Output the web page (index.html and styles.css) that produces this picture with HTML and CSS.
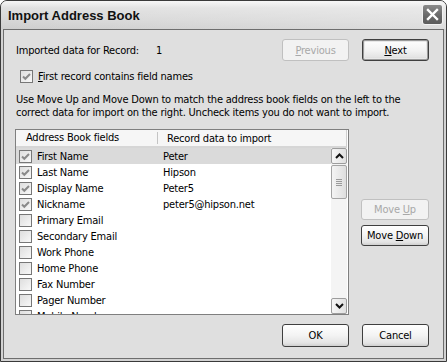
FILE: index.html
```html
<!DOCTYPE html>
<html>
<head>
<meta charset="utf-8">
<link rel="stylesheet" href="styles.css">
</head>
<body>
<div class="window">
  <div class="titlebar">
    <span class="title">Import Address Book</span>
    <span class="close"><svg width="21" height="21" viewBox="0 0 21 21"><path d="M6 6 L15 15 M15 6 L6 15" stroke="#fff" stroke-width="2.4" stroke-linecap="square"/></svg></span>
  </div>
  <div class="client">
    <div class="row1">
      <span class="lbl">Imported data for Record:</span>
      <span class="num">1</span>
      <span class="spacer"></span>
      <button class="btn disabled"><u>P</u>revious</button>
      <button class="btn default"><u>N</u>ext</button>
    </div>
    <div class="chkrow">
      <span class="cb checked"><svg width="11" height="11" viewBox="0 0 11 11"><path d="M2 5.5 L4.3 7.8 L9 3" stroke="#8a8a8a" stroke-width="2" fill="none"/></svg></span>
      <span><u>F</u>irst record contains field names</span>
    </div>
    <p class="desc">Use Move Up and Move Down to match the address book fields on the left to the<br>correct data for import on the right. Uncheck items you do not want to import.</p>
    <div class="main">
      <div class="list">
        <div class="lhead">
          <span class="hc1">Address Book fields</span>
          <span class="hc2">Record data to import</span>
        </div>
        <div class="lbody">
          <div class="rows">
            <div class="item sel"><span class="cb checked"><svg width="11" height="11" viewBox="0 0 11 11"><path d="M2 5.5 L4.3 7.8 L9 3" stroke="#8a8a8a" stroke-width="2" fill="none"/></svg></span><span class="f">First Name</span><span class="v">Peter</span></div>
            <div class="item"><span class="cb checked"><svg width="11" height="11" viewBox="0 0 11 11"><path d="M2 5.5 L4.3 7.8 L9 3" stroke="#8a8a8a" stroke-width="2" fill="none"/></svg></span><span class="f">Last Name</span><span class="v">Hipson</span></div>
            <div class="item"><span class="cb checked"><svg width="11" height="11" viewBox="0 0 11 11"><path d="M2 5.5 L4.3 7.8 L9 3" stroke="#8a8a8a" stroke-width="2" fill="none"/></svg></span><span class="f">Display Name</span><span class="v">Peter5</span></div>
            <div class="item"><span class="cb checked"><svg width="11" height="11" viewBox="0 0 11 11"><path d="M2 5.5 L4.3 7.8 L9 3" stroke="#8a8a8a" stroke-width="2" fill="none"/></svg></span><span class="f">Nickname</span><span class="v">peter5@hipson.net</span></div>
            <div class="item"><span class="cb"></span><span class="f">Primary Email</span><span class="v"></span></div>
            <div class="item"><span class="cb"></span><span class="f">Secondary Email</span><span class="v"></span></div>
            <div class="item"><span class="cb"></span><span class="f">Work Phone</span><span class="v"></span></div>
            <div class="item"><span class="cb"></span><span class="f">Home Phone</span><span class="v"></span></div>
            <div class="item"><span class="cb"></span><span class="f">Fax Number</span><span class="v"></span></div>
            <div class="item"><span class="cb"></span><span class="f">Pager Number</span><span class="v"></span></div>
            <div class="item"><span class="cb"></span><span class="f">Mobile Number</span><span class="v"></span></div>
          </div>
          <div class="scroll">
            <span class="sbtn"><svg width="9" height="6" viewBox="0 0 9 6"><path d="M1 5 L4.5 1.5 L8 5" stroke="#111" stroke-width="2" fill="none"/></svg></span>
            <span class="thumb"><i></i><i></i><i></i><i></i></span>
            <span class="track"></span>
            <span class="sbtn"><svg width="9" height="6" viewBox="0 0 9 6"><path d="M1 1 L4.5 4.5 L8 1" stroke="#111" stroke-width="2" fill="none"/></svg></span>
          </div>
        </div>
      </div>
      <div class="side">
        <button class="btn wide disabled">Move <u>U</u>p</button>
        <button class="btn wide">Move <u>D</u>own</button>
      </div>
    </div>
    <div class="footer">
      <button class="btn">OK</button>
      <button class="btn">Cancel</button>
    </div>
  </div>
</div>
</body>
</html>
```

FILE: styles.css
```css
body {
  margin: 0;
  background: #ffffff;
  font-family: "DejaVu Sans Condensed", "DejaVu Sans", sans-serif;
  font-stretch: condensed;
  font-size: 11px;
  letter-spacing: -0.2px;
  color: #000;
}

.window {
  width: 447px;
  height: 362px;
  box-sizing: border-box;
  border: 1px solid #3a3a3a;
  border-radius: 7px 7px 0 0;
  background: #d2d2d2;
  display: flex;
  flex-direction: column;
  overflow: hidden;
}

.titlebar {
  height: 28px;
  flex: none;
  display: flex;
  align-items: center;
  padding: 0 3px 0 7px;
  background: linear-gradient(90deg, rgba(255,255,255,0) 0%, rgba(255,255,255,0.3) 100%),
              linear-gradient(#f6f6f6, #e0e0e0 25%, #d6d6d6 70%, #cecece);
}

.title {
  flex: 1;
  font-family: "Liberation Sans", Arial, sans-serif;
  font-stretch: normal;
  letter-spacing: 0;
  font-weight: bold;
  font-size: 13px;
  color: #111;
}

.close {
  width: 21px;
  height: 21px;
  box-sizing: border-box;
  border: 1px solid #f2f2f2;
  border-radius: 3px;
  background: linear-gradient(#8a8a8a, #676767 60%, #5c5c5c);
  display: flex;
  margin-top: -2px;
}

.close svg {
  margin: -1px;
}

.client {
  flex: 1;
  margin: 0 2px 2px;
  border: 1px solid #6e6e6e;
  background: #dfdfdf;
  padding: 9px 14px 0 11px;
  display: flex;
  flex-direction: column;
}

.row1 {
  height: 22px;
  display: flex;
  align-items: center;
}

.lbl {
  width: 141px;
  padding-left: 1px;
  box-sizing: border-box;
}

.spacer {
  flex: 1;
}

.btn {
  font-family: inherit;
  font-stretch: condensed;
  letter-spacing: -0.2px;
  font-size: 11px;
  color: #000;
  width: 67px;
  height: 22px;
  box-sizing: border-box;
  border: 1px solid #3f3f3f;
  border-radius: 3px;
  background: linear-gradient(#ffffff, #f3f3f3 50%, #e4e4e4 85%, #cfcfcf);
  padding: 0;
  margin: 0;
}

.row1 .btn + .btn {
  margin-left: 13px;
}

.btn.default {
  box-shadow: inset 0 0 0 1px #9a9a9a, inset 0 0 0 2px #e8e8e8;
}

.btn.disabled {
  border-color: #c0c0c0;
  background: #f2f2f2;
  color: #a8a8a8;
}

.chkrow {
  margin-top: 7px;
  height: 16px;
  display: flex;
  align-items: center;
  padding-left: 5px;
  gap: 5px;
}

.cb {
  width: 13px;
  height: 13px;
  box-sizing: border-box;
  border: 1px solid #777;
  background: linear-gradient(135deg, #dedede, #f8f8f8);
  display: flex;
  flex: none;
}

.desc {
  margin: 9px 0 0;
  padding-left: 1px;
  line-height: 13px;
  height: 26px;
}

.main {
  margin-top: 10px;
  height: 186px;
  display: flex;
}

.list {
  width: 334px;
  box-sizing: border-box;
  border: 1px solid #7f7f7f;
  background: #fff;
  display: flex;
  flex-direction: column;
}

.lhead {
  height: 18px;
  flex: none;
  display: flex;
  align-items: center;
  background: #f6f6f6;
  border-bottom: 2px solid #d6d6d6;
  box-sizing: border-box;
  margin-right: 1px;
  border-right: 1px solid #cfcfcf;
}

.hc1 {
  width: 142px;
  padding-left: 10px;
  box-sizing: border-box;
  border-right: 1px solid #c4c4c4;
  height: 12px;
  line-height: 12px;
}

.hc2 {
  padding-left: 9px;
}

.lbody {
  flex: 1;
  display: flex;
  overflow: hidden;
}

.rows {
  flex: 1;
  overflow: hidden;
}

.item {
  height: 16px;
  display: flex;
  align-items: center;
  padding-left: 3px;
}

.item.sel {
  background: #dadada;
}

.item .f {
  width: 126px;
  padding-left: 5px;
}

.scroll {
  width: 16px;
  display: flex;
  flex-direction: column;
  background: #f4f4f4;
  margin-right: 1px;
}

.sbtn {
  height: 16px;
  box-sizing: border-box;
  border: 1px solid #9c9c9c;
  border-radius: 2px;
  background: linear-gradient(90deg, #f6f6f6, #e0e0e0);
  display: flex;
  align-items: center;
  justify-content: center;
}

.thumb {
  height: 34px;
  margin-top: 1px;
  box-sizing: border-box;
  border: 1px solid #a4a4a4;
  border-radius: 2px;
  background: linear-gradient(90deg, #f4f4f4, #dedede);
  display: flex;
  flex-direction: column;
  align-items: center;
  justify-content: center;
  gap: 1px;
}

.thumb i {
  width: 6px;
  height: 1px;
  background: #9a9a9a;
}

.track {
  flex: 1;
}

.side {
  margin-left: 12px;
  padding-top: 70px;
  display: flex;
  flex-direction: column;
  gap: 5px;
}

.btn.wide {
  width: 68px;
  height: 21px;
}

.footer {
  margin-top: 9px;
  display: flex;
  justify-content: flex-end;
  gap: 13px;
}

.footer .btn {
  height: 23px;
}
```
